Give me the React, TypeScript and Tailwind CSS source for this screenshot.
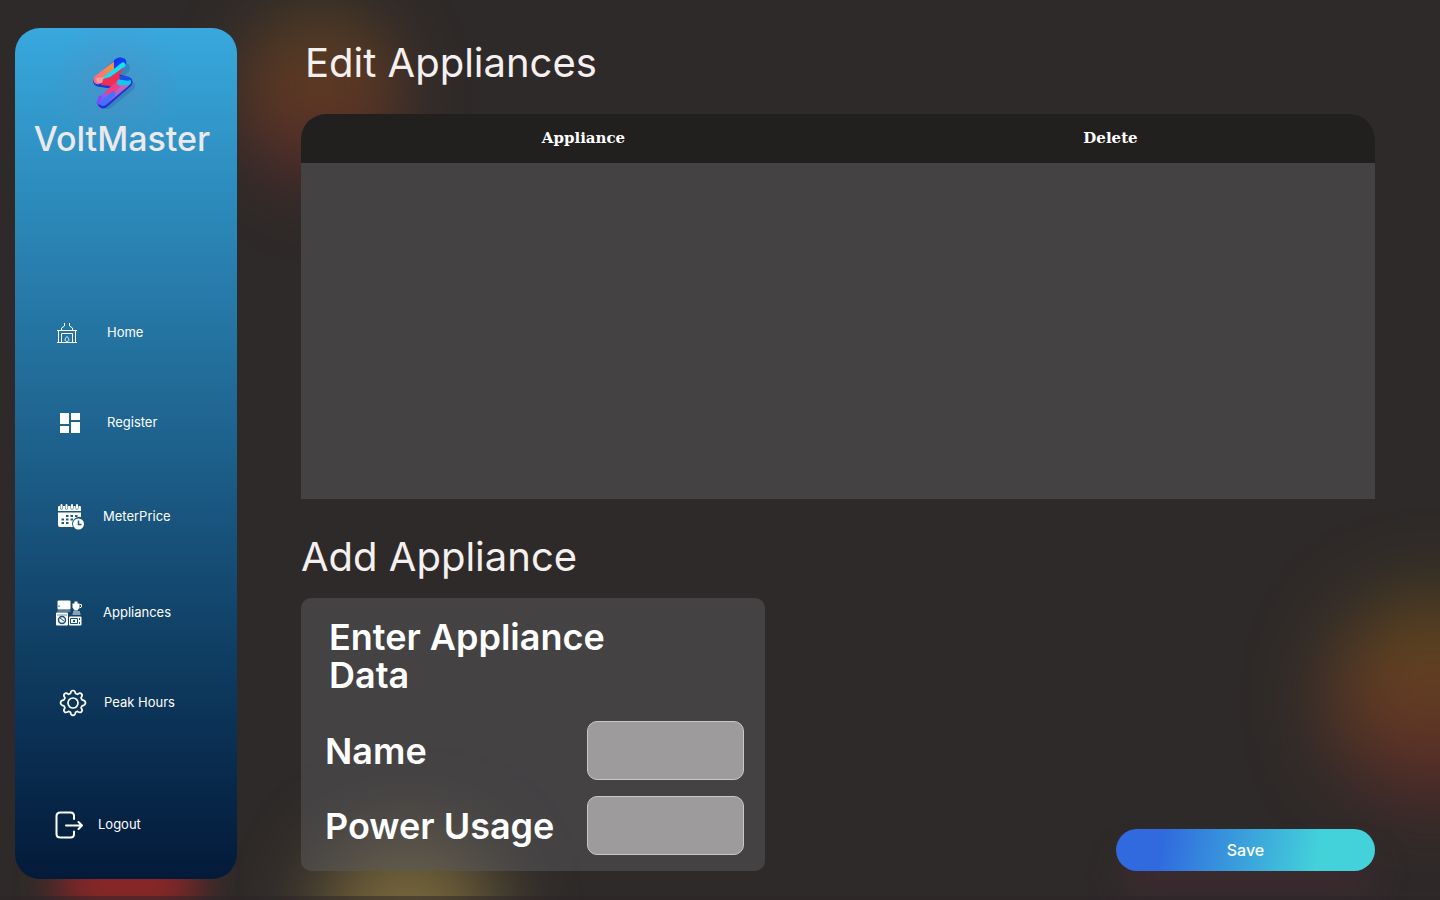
import type { ReactNode } from "react";

function Logo() {
  return (
    <svg width="44" height="54" viewBox="0 0 44 54" fill="none" strokeLinecap="round" strokeLinejoin="round" aria-hidden="true">
      <defs>
        <linearGradient id="top" x1="4" y1="24" x2="32" y2="4" gradientUnits="userSpaceOnUse">
          <stop offset="0" stopColor="#f06d8c" />
          <stop offset="0.6" stopColor="#f0914a" />
          <stop offset="1" stopColor="#ef8b3f" />
        </linearGradient>
        <linearGradient id="low" x1="10" y1="48" x2="36" y2="24" gradientUnits="userSpaceOnUse">
          <stop offset="0" stopColor="#6a5cff" />
          <stop offset="0.5" stopColor="#b45fd0" />
          <stop offset="1" stopColor="#d760b4" />
        </linearGradient>
      </defs>
      <path d="M33 11 L24 21 M38 29 L16 47" stroke="#2a6ea8" strokeOpacity="0.45" strokeWidth="10" />
      <path d="M28 6 L6.500 24 L19 26 M23 22 L35 25 L11 46" stroke="#1b34d8" strokeWidth="11" />
      <path d="M27 6.500 L6 22.500" stroke="url(#top)" strokeWidth="9.500" />
      <path d="M22 7 V3 Q28 -1 33 2 Q35 4 34 7 L22 14 Z" fill="#0b3df5" />
      <path d="M31 8 L13 22" stroke="#12e2f5" strokeWidth="5" />
      <path d="M32 10 L27 19 L33 20 L30 25 L26 30 L9 28 L11 22 L18 20 Z" fill="#ef2e55" />
      <path d="M4 21 L12 20 L10 26 L5 26 Z" fill="#f6a3a0" fillOpacity="0.8" />
      <path d="M33 25 L11 43.500" stroke="url(#low)" strokeWidth="10.500" />
      <path d="M17 31 L26 23 L32 20 L28 30 L20 37 L12 37 Z" fill="#ee3f86" />
      <path d="M28 25.500 L36 25" stroke="#10c8f2" strokeWidth="6" />
      <path d="M29 21 L36 22" stroke="#1450f0" strokeWidth="3.500" />
      <path d="M21 37 L11 46" stroke="#2f78ff" strokeWidth="5" strokeOpacity="0.85" />
      <path d="M8 40 L6 46" stroke="#7b4df2" strokeWidth="3" />
    </svg>
  );
}

function HomeIcon() {
  return (
    <svg width="22" height="22" viewBox="0 0 22 22" fill="none" stroke="white" aria-hidden="true">
      <path d="M8.500 1v3l-3 2v2.500M13.500 1v3l3 2v2.500M1 8.500h20M1 20.500h20M2.500 9v11M19.500 9v11M5.500 20v-8.500h11V20" />
      <path d="M11 14.500c-3 3-2 5 0 5s3-2 0-5Z" />
    </svg>
  );
}

function RegisterIcon() {
  return (
    <svg width="22" height="22" viewBox="0 0 22 22" fill="white" aria-hidden="true">
      <path d="M1 1h9v11H1zM12 1h9v7h-9zM1 14h9v7H1zM12 10h9v11h-9z" />
    </svg>
  );
}

function MeterIcon() {
  return (
    <svg width="28" height="28" viewBox="0 0 28 28" fill="white" aria-hidden="true">
      <path d="M1 4q0-1 1-1h21q1 0 1 1v4H1zM1 9.500h23V14a7 7 0 0 0-8 10H3q-2 0-2-2z" />
      <path d="M4.500 2v3M9.500 2v3M15 2v3M20 2v3" stroke="#1b5a85" strokeWidth="3" strokeLinecap="round" />
      <path d="M4.500 2v3M9.500 2v3M15 2v3M20 2v3" stroke="white" strokeWidth="2" strokeLinecap="round" />
      <path d="M9 12h2.500v2H9zM13.500 12H16v2h-2.500zM18 12h2.500v2H18zM4.500 15.500H7v2H4.500zM9 15.500h2.500v2H9zM13.500 15.500H16v2h-2.500zM4.500 19H7v2H4.500zM9 19h2.500v2H9z" fill="#1b5a85" />
      <circle cx="21.500" cy="21" r="5.500" />
      <path d="M21.500 17.500v4h3" stroke="#1b5a85" strokeWidth="1.500" fill="none" />
    </svg>
  );
}

function AppliancesIcon() {
  return (
    <svg width="28" height="28" viewBox="0 0 28 28" fill="none" aria-hidden="true">
      <rect x="2.500" y="1.500" width="13" height="9" rx="1" fill="white" />
      <path d="M4 6.500v1.500" stroke="#19507a" />
      <path d="M2.500 12h13" stroke="white" strokeOpacity="0.6" />
      <path d="M17.500 4.500h7v4l-2 3h-3l-2-3zM19.500 2.500h3v2h-3z" fill="white" />
      <path d="M24.500 5.500h2v2.500l-2 1M18 13h7M17.500 15h8" stroke="white" />
      <rect x="1" y="13.500" width="12" height="13" rx="1" fill="white" />
      <path d="M2 16h10" stroke="#19507a" strokeOpacity="0.6" />
      <circle cx="7" cy="21" r="3.500" stroke="#19507a" strokeWidth="1.500" />
      <path d="m5 19 4 3" stroke="#19507a" />
      <rect x="14" y="17.500" width="12.500" height="9" rx="1" fill="white" />
      <path d="M15.500 19.500h7v5h-7zM24.500 19v2M24.500 23v2" stroke="#19507a" />
      <path d="M18 22h2" stroke="#19507a" strokeWidth="2" />
    </svg>
  );
}

function GearIcon() {
  return (
    <svg width="28" height="28" viewBox="0 0 28 28" fill="none" stroke="white" strokeWidth="1.700" strokeLinejoin="round" aria-hidden="true">
      <circle cx="14" cy="14" r="5" />
      <path d="M11.500 4.500q.3-3 2.500-3t2.500 3l2 .8q2.500-2 4-.5t-.5 4l1 2q3.500.5 3.500 3t-3.500 3l-1 2q2 2.500.5 4t-4-.5l-2 1q-.3 3-2.500 3t-2.500-3l-2-1q-2.500 2-4 .5t.5-4l-1-2q-3.500-.5-3.500-3t3.500-3l1-2q-2-2.500-.5-4t4 .5z" />
    </svg>
  );
}

function LogoutIcon() {
  return (
    <svg width="28" height="28" viewBox="0 0 28 28" fill="none" stroke="white" strokeWidth="2" strokeLinecap="round" strokeLinejoin="round" aria-hidden="true">
      <path d="M19 8V5q0-3.500-3.500-3.500h-10Q1.500 1.500 1.500 5v18q0 3.500 4 3.500h10Q19 26.500 19 23v-2.500M11 14.500h16M23.500 11l3.500 3.500-3.500 3.500" />
    </svg>
  );
}

function NavItem({ icon, label, place }: { icon: ReactNode; label: string; place: string }) {
  return (
    <a href="#" className={`flex h-7 items-center text-[13px] text-white ${place}`}>
      {icon}
      <span>{label}</span>
    </a>
  );
}

export default function App() {
  return (
    <div className="relative isolate flex min-h-screen overflow-hidden bg-[#2e2a29] pt-7 pr-[65px] pb-[21px] pl-[15px] font-['Inter','Liberation_Sans',sans-serif]">
      <div aria-hidden="true" className="pointer-events-none absolute inset-0 -z-10">
        <div className="absolute top-0 left-60 h-48 w-40 rounded-full bg-linear-to-b from-[#5f4a20]/50 via-[#98481e]/50 to-[#5b2029]/50 blur-[32px]" />
        <div className="absolute -right-24 bottom-24 h-52 w-52 rounded-full bg-linear-to-b from-[#7a6010]/60 via-[#8b4820]/60 to-[#6b2029]/60 blur-[40px]" />
        <div className="absolute -bottom-6 left-14 h-20 w-36 rounded-full bg-[#b02527]/70 blur-[20px]" />
        <div className="absolute -bottom-24 left-80 h-40 w-44 rounded-full bg-[#8b7840]/80 blur-[40px]" />
        <div className="absolute right-16 bottom-1 h-10 w-64 rounded-full bg-[#4c2937]/50 blur-[16px]" />
        <div className="absolute inset-x-0 bottom-0 h-1 bg-[#2c2328]/50" />
      </div>

      <aside className="flex w-[222px] shrink-0 flex-col rounded-[25px] bg-linear-to-b from-[#38a8dd] via-[#1d608b] via-50% to-[#041a39]">
        <div className="flex flex-col items-center bg-[radial-gradient(circle_at_45%_42%,#6f7fb04d,transparent_45%)] pt-[29px]">
          <div className="pr-6">
            <Logo />
          </div>
          <p className="mt-1 pr-2 text-[34px] leading-[48px] font-medium text-[#ece8ec]">VoltMaster</p>
        </div>
        <nav aria-label="Main" className="flex grow flex-col pt-[156px]">
          <NavItem icon={<HomeIcon />} label="Home" place="ml-[41px] gap-[29px]" />
          <NavItem icon={<RegisterIcon />} label="Register" place="mt-[62px] ml-11 gap-[26px]" />
          <NavItem icon={<MeterIcon />} label="MeterPrice" place="mt-[66px] ml-[42px] gap-[18px]" />
          <NavItem icon={<AppliancesIcon />} label="Appliances" place="mt-[68px] ml-10 gap-5" />
          <NavItem icon={<GearIcon />} label="Peak Hours" place="mt-[62px] ml-11 gap-[17px]" />
          <NavItem icon={<LogoutIcon />} label="Logout" place="mt-auto mb-10 ml-10 gap-[15px]" />
        </nav>
      </aside>

      <main className="ml-16 flex min-w-0 grow flex-col">
        <h1 className="pt-2 pl-1 text-[40px] leading-[54px] text-[#f5f0f0]">Edit Appliances</h1>
        <div className="mt-6 h-[385px] overflow-hidden rounded-t-[25px] bg-[#444243]">
          <table className="w-full table-fixed">
            <thead className="bg-[#21201e] font-['DejaVu_Serif',serif] text-[15px] text-white">
              <tr className="h-[49px]">
                <th scope="col" className="p-0 pl-7 font-bold">Appliance</th>
                <th scope="col" className="p-0 pl-2 font-bold">Delete</th>
              </tr>
            </thead>
            <tbody />
          </table>
        </div>
        <h2 className="mt-7 text-[40px] leading-[59px] text-[#f5f0f0]">Add Appliance</h2>
        <div className="mt-3 flex items-end justify-between">
          <form id="appliance" className="flex h-[273px] w-[464px] flex-col rounded-[10px] bg-[#5a5a5d]/50 pt-5 pr-[21px] pl-6 font-semibold text-white">
            <h3 className="w-80 pl-1 text-[36px] leading-[38px]">Enter Appliance Data</h3>
            <div className="mt-[27px] flex items-center justify-between">
              <label htmlFor="name" className="text-[36px] leading-[38px]">Name</label>
              <input id="name" className="h-[59px] w-[157px] rounded-[10px] border border-[#c9c7c8] bg-[#9d9b9b] px-3 text-base" />
            </div>
            <div className="mt-4 flex items-center justify-between">
              <label htmlFor="power" className="text-[36px] leading-[38px]">Power Usage</label>
              <input id="power" className="h-[59px] w-[157px] rounded-[10px] border border-[#c9c7c8] bg-[#9d9b9b] px-3 text-base" />
            </div>
          </form>
          <button type="submit" form="appliance" className="h-[42px] w-[259px] rounded-full bg-[linear-gradient(100deg,#306ade_18%,#43d2da_78%)] font-medium text-white">
            Save
          </button>
        </div>
      </main>
    </div>
  );
}
